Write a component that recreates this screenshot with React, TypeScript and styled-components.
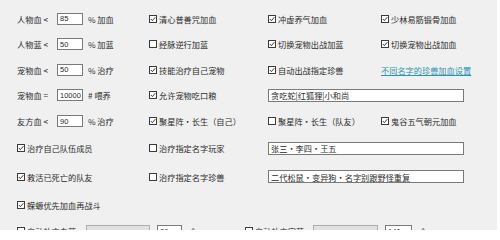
import styled, { createGlobalStyle } from "styled-components";

const GlobalStyle = createGlobalStyle`
  html, body {
    margin: 0;
    padding: 0;
    background: #ffffff;
  }
  body {
    font-family: "Noto Sans CJK SC", "Liberation Sans", sans-serif;
  }
`;

const Panel = styled.div`
  width: 497px;
  height: 230px;
  box-sizing: border-box;
  background: #f0f0f0;
  padding: 6px 0 0 17px;
  overflow: hidden;
  display: grid;
  grid-template-columns: 132px 119px 113px 1fr;
  grid-template-rows: 25px 26px 25px 26px 26px 28px 29px 28px 24px;
  font-size: 8.2px;
  color: #2b2b2b;
`;

const Cell = styled.div<{ $span?: number }>`
  display: flex;
  align-items: center;
  white-space: nowrap;
  grid-column: ${(p) => (p.$span ? `span ${p.$span}` : "auto")};
`;

const Label = styled.span`
  width: 40px;
  flex: none;
`;

const NumBox = styled.div<{ $w?: number }>`
  width: ${(p) => p.$w ?? 26}px;
  height: 12px;
  box-sizing: border-box;
  border: 1px solid #7a7a7a;
  background: #fff;
  font-family: "Liberation Sans", sans-serif;
  font-size: 7.5px;
  padding-left: 2px;
  display: flex;
  align-items: center;
  flex: none;
`;

const Unit = styled.span`
  margin-left: 5px;
`;

const TextBox = styled.div`
  width: 196px;
  height: 13px;
  box-sizing: border-box;
  border: 1px solid #7a7a7a;
  background: #fff;
  padding-left: 2px;
  display: flex;
  align-items: center;
`;

const Box = styled.span`
  width: 8px;
  height: 8px;
  box-sizing: border-box;
  border: 1px solid #3c3c3c;
  background: #fff;
  margin-right: 2px;
  display: inline-flex;
  flex: none;
  svg {
    display: block;
  }
`;

const LinkText = styled.span`
  color: #2a94b2;
  text-decoration: underline;
`;

const BottomRow = styled.div`
  grid-column: 1 / -1;
  display: flex;
  align-items: center;
`;

const Group = styled.div<{ $w: number }>`
  width: ${(p) => p.$w}px;
  display: flex;
  align-items: center;
  flex: none;
`;

const GroupLabel = styled.div<{ $w: number }>`
  width: ${(p) => p.$w}px;
  display: flex;
  align-items: center;
  flex: none;
  white-space: nowrap;
`;

const Select = styled.div<{ $w: number }>`
  width: ${(p) => p.$w}px;
  height: 13px;
  box-sizing: border-box;
  border: 1px solid #adadad;
  background: #e1e1e1;
  flex: none;
  margin-right: 7px;
`;

const Piece = styled.span`
  margin-left: 7px;
`;

function Check({ on, children }: { on?: boolean; children: React.ReactNode }) {
  return (
    <>
      <Box>
        {on && (
          <svg width="6" height="6" viewBox="0 0 6 6">
            <path d="M0.8 3 L2.4 4.6 L5.3 1.2" fill="none" stroke="#222" strokeWidth="0.9" />
          </svg>
        )}
      </Box>
      <span>{children}</span>
    </>
  );
}

function Threshold({ label, value, unit }: { label: string; value: string; unit: string }) {
  return (
    <Cell>
      <Label>{label}</Label>
      <NumBox>{value}</NumBox>
      <Unit>{unit}</Unit>
    </Cell>
  );
}

export default function App() {
  return (
    <>
      <GlobalStyle />
      <Panel>
        <Threshold label="人物血 <" value="85" unit="% 加血" />
        <Cell><Check on>清心普善咒加血</Check></Cell>
        <Cell><Check on>冲虚养气加血</Check></Cell>
        <Cell><Check on>少林易筋锻骨加血</Check></Cell>

        <Threshold label="人物蓝 <" value="50" unit="% 加蓝" />
        <Cell><Check>经脉逆行加蓝</Check></Cell>
        <Cell><Check on>切换宠物出战加蓝</Check></Cell>
        <Cell><Check on>切换宠物出战加血</Check></Cell>

        <Threshold label="宠物血 <" value="50" unit="% 治疗" />
        <Cell><Check on>技能治疗自己宠物</Check></Cell>
        <Cell><Check on>自动出战指定珍兽</Check></Cell>
        <Cell><LinkText>不同名字的珍兽加血设置</LinkText></Cell>

        <Threshold label="宠物血 =" value="10000" unit="# 喂养" />
        <Cell><Check on>允许宠物吃口粮</Check></Cell>
        <Cell $span={2}><TextBox>贪吃蛇|红狐狸|小和尚</TextBox></Cell>

        <Threshold label="友方血 <" value="90" unit="% 治疗" />
        <Cell><Check on>聚星阵·长生（自己）</Check></Cell>
        <Cell><Check>聚星阵·长生（队友）</Check></Cell>
        <Cell><Check on>鬼谷五气朝元加血</Check></Cell>

        <Cell><Check on>治疗自己队伍成员</Check></Cell>
        <Cell><Check>治疗指定名字玩家</Check></Cell>
        <Cell $span={2}><TextBox>张三•李四•王五</TextBox></Cell>

        <Cell><Check on>救活已死亡的队友</Check></Cell>
        <Cell><Check>治疗指定名字珍兽</Check></Cell>
        <Cell $span={2}><TextBox>二代松鼠•变异狗•名字别跟野怪重复</TextBox></Cell>

        <Cell $span={4}><Check on>蝾螈优先加血再战斗</Check></Cell>

        <BottomRow>
          <Group $w={228}>
            <GroupLabel $w={69}><Check>自动补充血药</Check></GroupLabel>
            <Select $w={64} />
            <NumBox $w={25}>20</NumBox>
            <Piece>个</Piece>
          </Group>
          <Group $w={200}>
            <GroupLabel $w={68}><Check>自动补充宠药</Check></GroupLabel>
            <Select $w={65} />
            <NumBox $w={27}>140</NumBox>
            <Piece>个</Piece>
          </Group>
        </BottomRow>
      </Panel>
    </>
  );
}
